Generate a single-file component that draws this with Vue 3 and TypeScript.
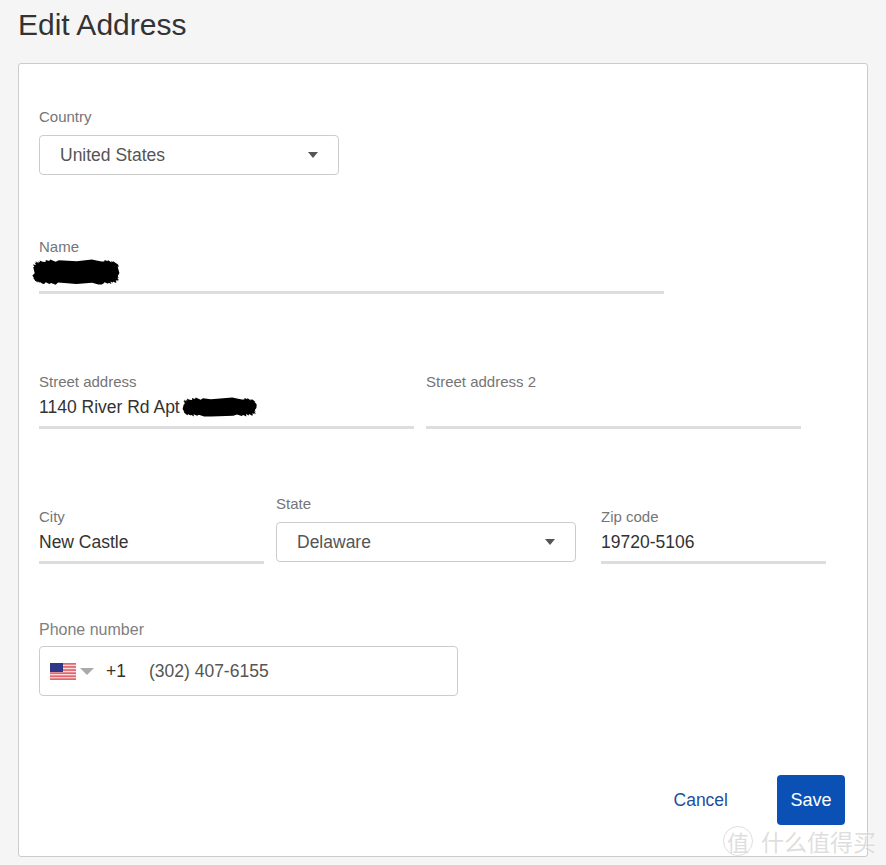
<template>
  <div class="page">
    <h1 class="title">Edit Address</h1>

    <form class="card" @submit.prevent>
      <div class="field country">
        <div class="label">Country</div>
        <div class="select">
          <span>United States</span>
          <span class="caret"></span>
        </div>
      </div>

      <div class="field name">
        <div class="label">Name</div>
        <div class="value">
          <svg class="scribble name-scribble" width="88" height="26" viewBox="0 0 88 26">
            <path :d="nameBlob" fill="#000" />
          </svg>
        </div>
      </div>

      <div class="row street-row">
        <div class="field street">
          <div class="label">Street address</div>
          <div class="value">
            1140 River Rd Apt<svg class="street-scribble" width="75" height="20" viewBox="0 0 75 20">
              <path :d="streetBlob" fill="#000" />
            </svg>
          </div>
        </div>
        <div class="field street">
          <div class="label">Street address 2</div>
          <div class="value"></div>
        </div>
      </div>

      <div class="row city-row">
        <div class="field short city">
          <div class="label">City</div>
          <div class="value">New Castle</div>
        </div>
        <div class="field state">
          <div class="label">State</div>
          <div class="select">
            <span>Delaware</span>
            <span class="caret"></span>
          </div>
        </div>
        <div class="field short zip">
          <div class="label">Zip code</div>
          <div class="value">19720-5106</div>
        </div>
      </div>

      <div class="field phone">
        <div class="label phone-label">Phone number</div>
        <div class="phone-box">
          <svg class="flag" width="26" height="17" viewBox="0 0 26 17">
            <rect width="26" height="17" fill="#f6dcdc" />
            <rect v-for="y in stripes" :key="y" x="0" :y="y" width="26" height="1.7" fill="#e2666d" />
            <rect width="13" height="9" fill="#2f3786" />
          </svg>
          <span class="flag-caret"></span>
          <span class="dial">+1</span>
          <span class="number">(302) 407-6155</span>
        </div>
      </div>

      <div class="actions">
        <button type="button" class="cancel-btn">Cancel</button>
        <button type="submit" class="save-btn">Save</button>
      </div>

      <!-- image watermark over the corner -->
      <div class="watermark">
        <span class="mark-circle">值</span>
        <span>什么值得买</span>
      </div>
    </form>
  </div>
</template>

<script setup lang="ts">
// redaction marks: a rounded outline with a small fixed jitter so the edge looks scrawled
function jaggedBlob(w: number, h: number, step: number): string {
  const points: string[] = [];
  const jitter = [0.9, -0.7, 0.4, -1.1, 1.2, -0.3, 0.7, -0.9, 0.2, 1];
  const count = Math.round((w * 2) / step);
  for (let i = 0; i < count; i++) {
    const angle = (i / count) * Math.PI * 2;
    const cos = Math.cos(angle);
    const sin = Math.sin(angle);
    // squarish ellipse, flat along the top and bottom
    const x = w / 2 + Math.sign(cos) * Math.pow(Math.abs(cos), 0.35) * (w / 2 - 1.5);
    const y = h / 2 + Math.sign(sin) * Math.pow(Math.abs(sin), 0.35) * (h / 2 - 1.5);
    const j = jitter[i % jitter.length];
    points.push(`${(x + j).toFixed(1)} ${(y + j).toFixed(1)}`);
  }
  return `M${points.join(' L')} Z`;
}

const nameBlob = jaggedBlob(88, 26, 2);
const streetBlob = jaggedBlob(75, 20, 2);
const stripes = [0, 3.1, 6.2, 9.3, 12.4, 15.3];
</script>

<style>
html,
body {
  margin: 0;
  background: #f5f5f5;
}
</style>

<style scoped>
.page {
  padding: 8px 0 8px 18px;
  font-family: "Liberation Sans", Arial, sans-serif;
  overflow: hidden;
}

.title {
  margin: 0 0 21px 0;
  font-size: 30px;
  line-height: 34px;
  font-weight: 400;
  color: #333;
}

.card {
  position: relative;
  box-sizing: border-box;
  width: 850px;
  height: 794px;
  padding: 43px 22px 30px 20px;
  background: #fff;
  border: 1px solid #ccc;
  border-radius: 3px;
  display: flex;
  flex-direction: column;
}

.label {
  font-size: 15px;
  line-height: 20px;
  color: #757575;
}

.phone-label {
  font-size: 16px;
  color: #808080;
}

.value {
  position: relative;
  box-sizing: border-box;
  height: 37px;
  padding-top: 3px;
  font-size: 17.5px;
  line-height: 24px;
  color: #333;
  white-space: nowrap;
  border-bottom: 3px solid #ddd;
}

.select {
  box-sizing: border-box;
  width: 300px;
  height: 40px;
  margin-top: 8px;
  padding: 0 20px 0 20px;
  display: flex;
  align-items: center;
  justify-content: space-between;
  font-size: 17.5px;
  color: #555;
  border: 1px solid #ccc;
  border-radius: 4px;
}

.caret {
  width: 0;
  height: 0;
  border-left: 5px solid transparent;
  border-right: 5px solid transparent;
  border-top: 6px solid #555;
}

.name {
  width: 625px;
  margin-top: 62px;
}

.scribble {
  position: absolute;
  left: -7px;
  top: 2px;
}

.street-scribble {
  vertical-align: -4px;
  margin-left: 2px;
}

.row {
  display: flex;
}

.street-row {
  margin-top: 78px;
  gap: 12px;
}

.street {
  width: 375px;
}

.city-row {
  margin-top: 65px;
}

.short {
  width: 225px;
  margin-top: 13px;
}

.state {
  margin-left: 12px;
  margin-right: 25px;
}

.phone {
  margin-top: 56px;
}

.phone-box {
  box-sizing: border-box;
  width: 419px;
  height: 50px;
  margin-top: 6px;
  padding-left: 10px;
  display: flex;
  align-items: center;
  font-size: 17.5px;
  border: 1px solid #ccc;
  border-radius: 4px;
}

.flag-caret {
  width: 0;
  height: 0;
  margin-left: 4px;
  border-left: 7px solid transparent;
  border-right: 7px solid transparent;
  border-top: 7px solid #aaa;
}

.dial {
  margin-left: 12px;
  color: #333;
}

.number {
  margin-left: 23px;
  color: #555;
}

.actions {
  margin-top: auto;
  padding-bottom: 1px;
  display: flex;
  justify-content: flex-end;
  align-items: center;
  gap: 49px;
}

.cancel-btn {
  padding: 0;
  background: none;
  border: none;
  font: inherit;
  font-size: 17.5px;
  color: #1a4f9c;
  cursor: pointer;
}

.save-btn {
  width: 68px;
  height: 50px;
  padding: 0;
  background: #0b51b5;
  border: none;
  border-radius: 4px;
  font: inherit;
  font-size: 18px;
  color: #fff;
  cursor: pointer;
}

.watermark {
  position: absolute;
  right: -9px;
  bottom: 0;
  display: flex;
  align-items: center;
  gap: 8px;
  font-family: "Noto Sans CJK SC", sans-serif;
  font-size: 23px;
  line-height: 30px;
  color: rgba(190, 190, 190, 0.5);
  text-shadow: 0 0 2px rgba(255, 255, 255, 0.8);
  white-space: nowrap;
}

.mark-circle {
  box-sizing: border-box;
  width: 30px;
  height: 30px;
  display: flex;
  align-items: center;
  justify-content: center;
  font-size: 22px;
  border: 1px solid rgba(190, 190, 190, 0.5);
  border-radius: 50%;
}
</style>
